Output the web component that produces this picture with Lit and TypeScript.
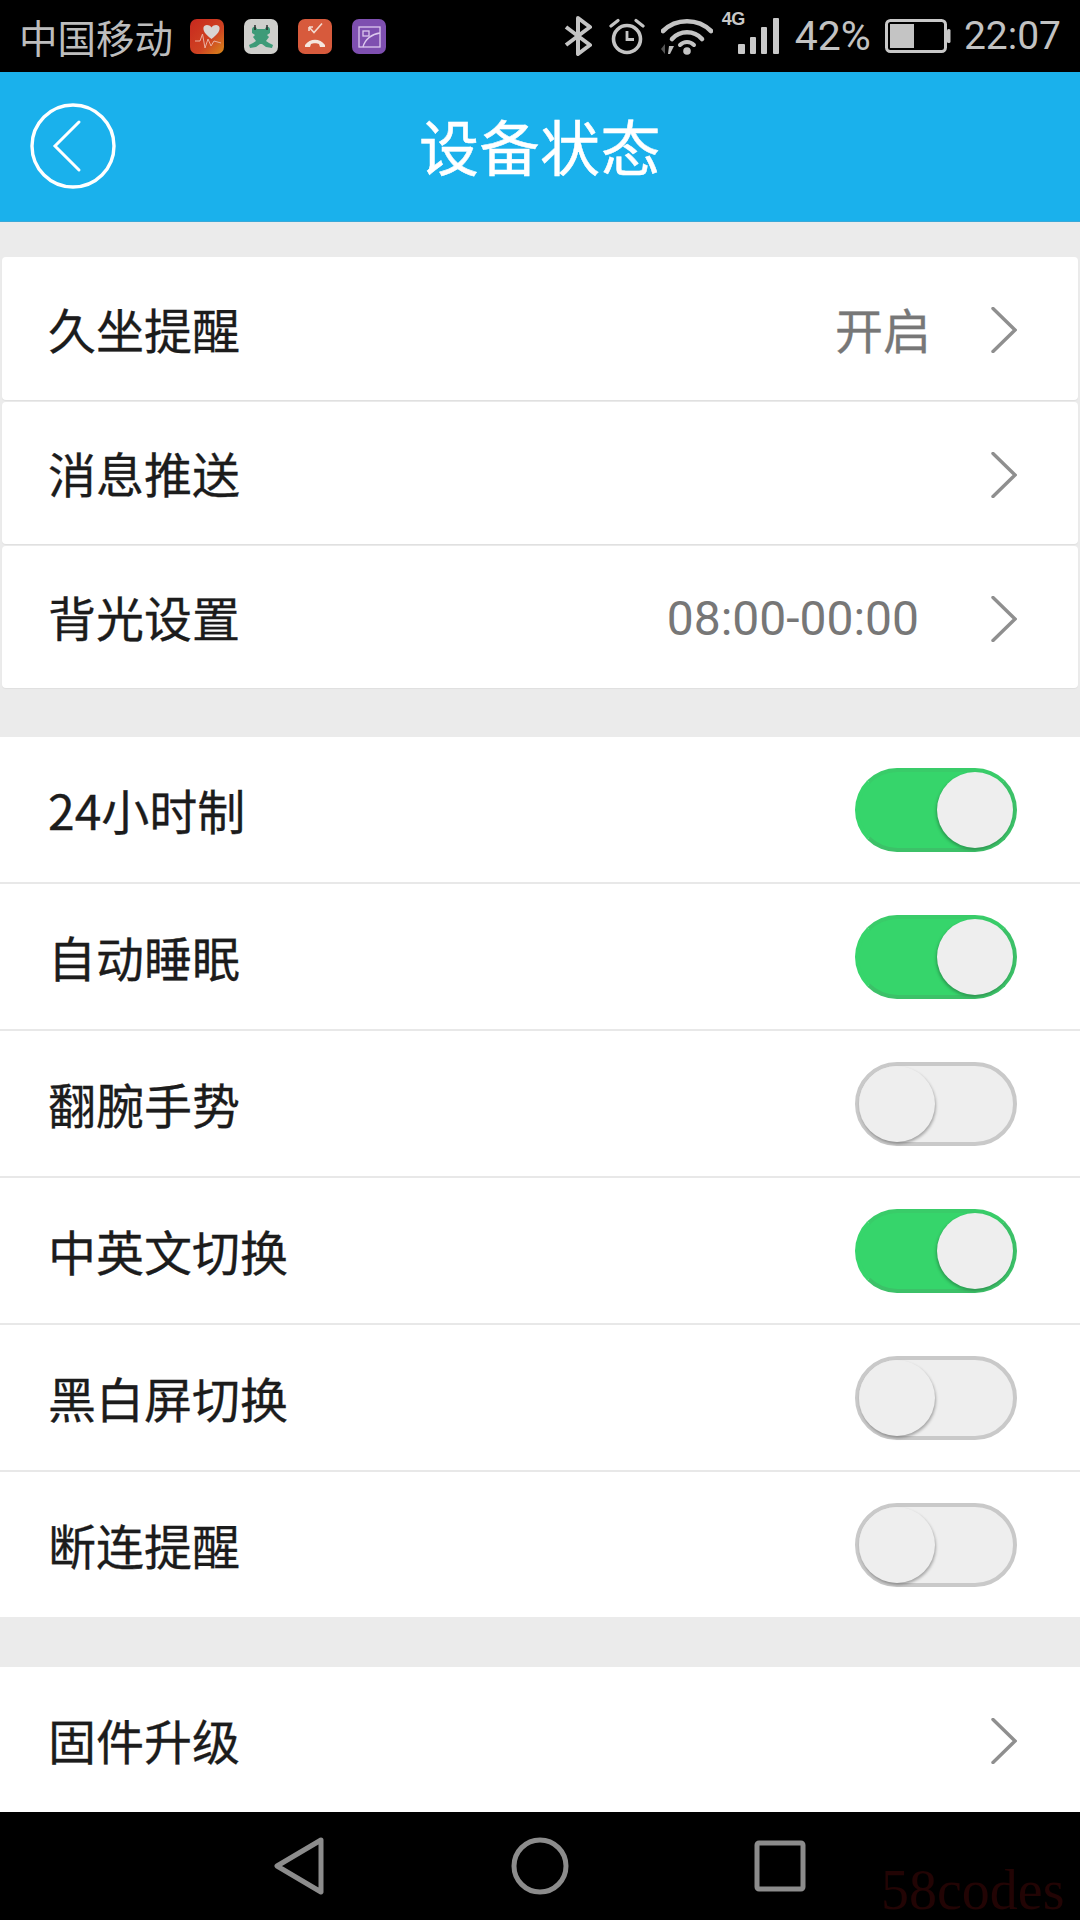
import { LitElement, html, css } from "lit";
import { customElement } from "lit/decorators.js";

const chevron = html`<svg class="chev" viewBox="0 0 26 46"><path d="M2 1.5 L24 23 L2 44.5" fill="none" stroke="#8f8f8f" stroke-width="3.4" stroke-linecap="round" stroke-linejoin="miter"/></svg>`;

const linkRows = [
  { label: "久坐提醒", value: "开启", kind: "cn" },
  { label: "消息推送", value: "", kind: "" },
  { label: "背光设置", value: "08:00-00:00", kind: "time" },
];
const toggleRows = [
  { label: "24小时制", on: true },
  { label: "自动睡眠", on: true },
  { label: "翻腕手势", on: false },
  { label: "中英文切换", on: true },
  { label: "黑白屏切换", on: false },
  { label: "断连提醒", on: false },
];

@customElement("app-root")
export class AppRoot extends LitElement {
  static styles = css`
    :host { display: block; width: 1080px; height: 1920px; overflow: hidden; font-family: "Roboto", "Noto Sans CJK SC", sans-serif; }
    .app { height: 1920px; display: flex; flex-direction: column; background: #ebebeb; }

    .status { height: 72px; flex: none; box-sizing: border-box; background: #000; display: flex; align-items: center; padding: 0 19px 0 19px; color: #c2c2c2; }
    .carrier { font-size: 38.5px; width: 171px; font-family: "Noto Sans CJK SC", sans-serif; font-weight: 400; line-height: 72px; color: #bdbdbd; }
    .apps { display: flex; gap: 20px; }
    .apps svg { width: 34px; height: 35px; display: block; }
    .sys { margin-left: auto; display: flex; align-items: center; }
    .sys svg { display: block; }
    .bt { width: 30px; height: 40px; }
    .alarm { width: 36px; height: 37px; margin-left: 16px; }
    .wifi { width: 52px; height: 38px; margin-left: 16px; }
    .sig { position: relative; width: 59px; height: 38px; margin-left: 9px; }
    .sig svg { position: absolute; right: 0; top: 0; width: 44px; height: 38px; }
    .fourg { position: absolute; left: 0; top: -7px; font: bold 18px/18px "Liberation Sans", sans-serif; letter-spacing: -.5px; color: #c8c8c8; }
    .pct { font-size: 41px; margin-left: 14px; font-weight: 400; }
    .batt { width: 66px; height: 34px; margin-left: 14px; }
    .clock { font-size: 39px; margin-left: 13px; font-weight: 400; }

    .bar { height: 150px; flex: none; background: #1ab1ec; border-bottom: 1px solid #3aa9d8; box-sizing: border-box; position: relative; display: flex; align-items: center; justify-content: center; }
    .back { position: absolute; left: 29px; top: 30px; width: 88px; height: 88px; }
    .title { font-family: "Noto Sans CJK SC", sans-serif; font-size: 60px; letter-spacing: .5px; color: #fff; font-weight: 400; line-height: 1; padding-bottom: 4px; -webkit-text-stroke: .5px #fff; }

    .main { flex: 1; min-height: 0; overflow: hidden; display: flex; flex-direction: column; }
    .g1 { margin-top: 35px; padding: 0 2px; display: flex; flex-direction: column; gap: 2px; }
    .g2 { margin-top: 49px; background: #fff; display: flex; flex-direction: column; }
    .g3 { margin-top: 50px; background: #fff; }

    .row { display: flex; align-items: center; background: #fff; font-family: "Noto Sans CJK SC", sans-serif; color: #1c1c1c; font-size: 48px; -webkit-text-stroke: .3px #1c1c1c; }
    .link { height: 142px; padding: 0 61px 0 46px; border-radius: 4px; box-shadow: 0 1px 1px rgba(0,0,0,.05); }
    .link.first { height: 143px; }
    .switch { height: 145px; padding: 0 63px 0 48px; border-bottom: 2px solid #e8e8e8; }
    .switch:last-child { border-bottom: 0; }
    .g3 .link { height: 145px; padding-left: 48px; padding-right: 63px; box-shadow: none; }
    .label { flex: 1; padding-bottom: 2px; }
    .val { color: #777; -webkit-text-stroke: 0; }
    .val.cn { margin-right: 60px; padding-bottom: 2px; -webkit-text-stroke: .3px #777; }
    .val.time { font-family: "Roboto", sans-serif; margin-right: 72px; margin-top: 2px; font-size: 48px; }
    .chev { width: 26px; height: 46px; display: block; margin-top: 3px; }

    .tg { position: relative; width: 162px; height: 84px; border-radius: 42px; box-sizing: border-box; flex: none; }
    .tg.on { background: #36d56b; border: 4px solid #3cc168; border-left-color: #36d56b; border-top-color: #39cc69; }
    .tg.off { background: #eeeeee; border: 4px solid #c9c9c9; }
    .knob { position: absolute; top: 0; width: 76px; height: 76px; border-radius: 50%; background: #eeeeee; }
    .on .knob { right: 0; box-shadow: -1px 2px 3px rgba(30,90,50,.45); }
    .off .knob { left: 0; box-shadow: 1px 2px 3px rgba(0,0,0,.3); }

    .nav { height: 108px; flex: none; background: #000; position: relative; display: flex; align-items: center; justify-content: center; }
    .nav svg.n1 { width: 50px; height: 58px; margin-right: 187px; }
    .nav svg.n2 { width: 58px; height: 58px; margin-right: 185px; }
    .nav svg.n3 { width: 52px; height: 52px; }
    .mark { position: absolute; left: 881px; top: 50px; font: 56px/56px "Liberation Serif", serif; color: #220404; }
  `;

  private apps() {
    return html`<div class="apps">
      <svg viewBox="0 0 34 35">
        <defs><linearGradient id="hg" x1="0" y1="0" x2="1" y2="1"><stop offset="0" stop-color="#c8281e"/><stop offset=".6" stop-color="#cf4322"/><stop offset="1" stop-color="#d88a1a"/></linearGradient></defs>
        <rect width="34" height="35" rx="7" fill="url(#hg)"/>
        <path d="M21.5 20 C15 15 13 12 13.5 8.5 C14 5.5 19 5 21.5 8.5 C24 5 29 5.5 29.5 8.5 C30 12 28 15 21.5 20Z" fill="#d9d4d2"/>
        <path d="M5 22 L10 22 L12.5 15 L15 29 L18 20 L21 27 L24 22 L31 24" fill="none" stroke="#eab0a0" stroke-width="1"/>
      </svg>
      <svg viewBox="0 0 34 35">
        <rect width="34" height="35" rx="7" fill="#cfcfcc"/>
        <path d="M8 10 C9 7 12 7 13 10 H21 C22 7 25 7 26 10 L26 14 L23 16 L25 18 L22 22 L25 24 L29 26 L28 29 L22 28 L18 25 H16 L12 28 L6 29 L5 26 L9 24 L12 22 L9 18 L11 16 L8 14Z" fill="#3e9b78"/>
        <path d="M11 6v5M23 6v5" stroke="#222" stroke-width="1.4"/>
      </svg>
      <svg viewBox="0 0 34 35">
        <rect width="34" height="35" rx="7" fill="#d75a3c"/>
        <path d="M11 8l5 5.5 8-9M11 8v4M11 8h4" fill="none" stroke="#f3d9cf" stroke-width="1.6"/>
        <path d="M7 26c5-7 15-7 20 0v2h-5l-1-3c-2-1-6-1-8 0l-1 3H7z" fill="#f5e6de"/>
      </svg>
      <svg viewBox="0 0 34 35">
        <rect width="34" height="35" rx="7" fill="#7e4fb0"/>
        <rect x="7" y="8" width="21" height="20" fill="none" stroke="#dcc8ee" stroke-width="1.3"/>
        <rect x="11" y="12" width="6" height="5" fill="none" stroke="#dcc8ee" stroke-width="1.3"/>
        <path d="M11 28 C13 20 20 15 28 14" fill="none" stroke="#dcc8ee" stroke-width="1.3"/>
      </svg>
    </div>`;
  }

  private sys() {
    return html`<div class="sys">
      <svg class="bt" viewBox="0 0 30 40"><path d="M3 11 L27 29 L15 38 V2 L27 11 L3 29" fill="none" stroke="#c4c4c4" stroke-width="4" stroke-linejoin="round"/></svg>
      <svg class="alarm" viewBox="0 0 36 37">
        <circle cx="18" cy="21" r="13.5" fill="none" stroke="#c4c4c4" stroke-width="3.6"/>
        <path d="M18 13v8.5h7" fill="none" stroke="#c4c4c4" stroke-width="2.8"/>
        <path d="M2 8 L9 2.5 M34 8 L27 2.5" stroke="#c4c4c4" stroke-width="3.2" stroke-linecap="round"/>
      </svg>
      <svg class="wifi" viewBox="0 0 52 38">
        <path d="M2 14 C15 1 37 1 50 14" fill="none" stroke="#c4c4c4" stroke-width="4.6" stroke-linecap="round"/>
        <path d="M11 22 C19 13 33 13 41 22" fill="none" stroke="#c4c4c4" stroke-width="4.6" stroke-linecap="round"/>
        <path d="M19 28 C23 24 29 24 33 28" fill="none" stroke="#c4c4c4" stroke-width="4" stroke-linecap="round"/>
        <circle cx="26" cy="34" r="3.8" fill="#c4c4c4"/>
        <path d="M0 32 L4 27 V37Z" fill="#555"/><path d="M9 37 L13 29 H8 L7 37Z" fill="#bdbdbd"/>
      </svg>
      <div class="sig">
        <span class="fourg">4G</span>
        <svg viewBox="0 0 44 38">
          <rect x="1" y="27" width="7" height="10" rx="1" fill="#c8c8c8"/>
          <rect x="13" y="20" width="6" height="17" rx="1" fill="#c8c8c8"/>
          <rect x="24" y="10" width="6" height="27" rx="1" fill="#c8c8c8"/>
          <rect x="36" y="1" width="6" height="36" rx="1" fill="#c8c8c8"/>
        </svg>
      </div>
      <span class="pct">42%</span>
      <svg class="batt" viewBox="0 0 66 34">
        <rect x="1.5" y="1.5" width="59" height="31" rx="4" fill="none" stroke="#c8c8c8" stroke-width="3"/>
        <rect x="5" y="5" width="24" height="24" fill="#c4c4c4"/>
        <rect x="62" y="10" width="3.5" height="14" rx="1.5" fill="#c8c8c8"/>
      </svg>
      <span class="clock">22:07</span>
    </div>`;
  }

  render() {
    return html`<div class="app">
      <div class="status">
        <span class="carrier">中国移动</span>
        ${this.apps()}
        ${this.sys()}
      </div>
      <div class="bar">
        <svg class="back" viewBox="0 0 88 88">
          <circle cx="44" cy="44" r="41" fill="none" stroke="#fff" stroke-width="3.4"/>
          <path d="M50 20 L26 44 L50 68" fill="none" stroke="#fff" stroke-width="3" stroke-linecap="round"/>
        </svg>
        <span class="title">设备状态</span>
      </div>
      <div class="main">
        <div class="g1">
          ${linkRows.map((r, i) => html`<div class="row link ${i === 0 ? "first" : ""}">
            <span class="label">${r.label}</span>
            ${r.value ? html`<span class="val ${r.kind}">${r.value}</span>` : ""}
            ${chevron}
          </div>`)}
        </div>
        <div class="g2">
          ${toggleRows.map((r) => html`<div class="row switch">
            <span class="label">${r.label}</span>
            <div class="tg ${r.on ? "on" : "off"}"><div class="knob"></div></div>
          </div>`)}
        </div>
        <div class="g3">
          <div class="row link"><span class="label">固件升级</span>${chevron}</div>
        </div>
      </div>
      <div class="nav">
        <svg class="n1" viewBox="0 0 50 58"><path d="M47 3 L3 29 L47 55Z" fill="none" stroke="#8c8c8c" stroke-width="5" stroke-linejoin="round"/></svg>
        <svg class="n2" viewBox="0 0 58 58"><circle cx="29" cy="29" r="26" fill="none" stroke="#8c8c8c" stroke-width="5"/></svg>
        <svg class="n3" viewBox="0 0 52 52"><rect x="3" y="3" width="46" height="46" rx="2" fill="none" stroke="#8c8c8c" stroke-width="5"/></svg>
        <span class="mark">58codes</span>
      </div>
    </div>`;
  }
}
